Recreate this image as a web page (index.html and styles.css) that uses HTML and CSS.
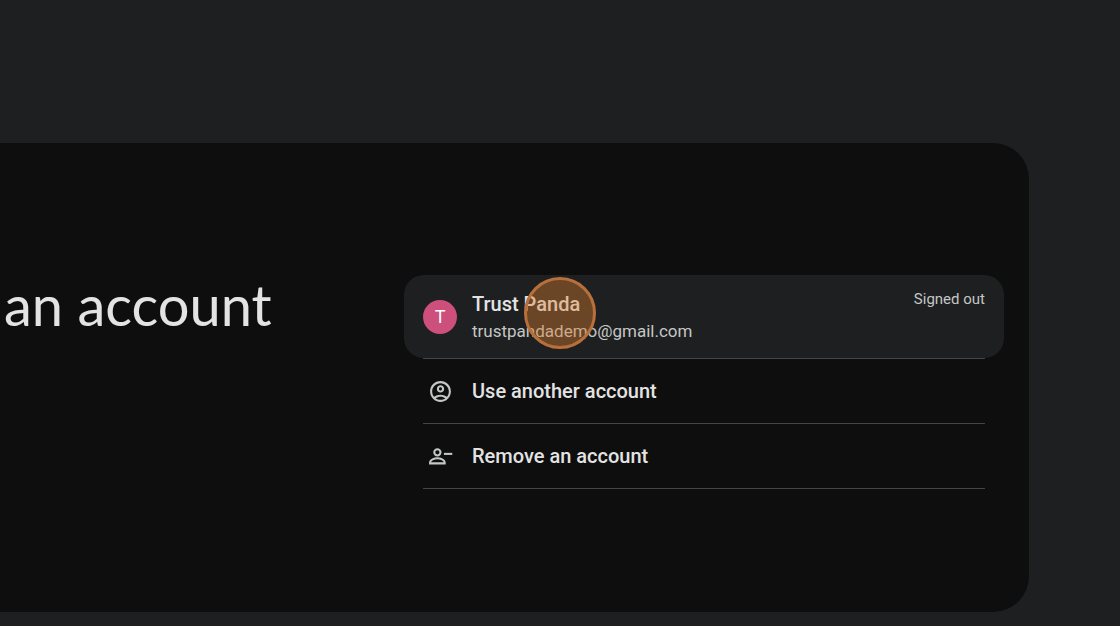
FILE: index.html
```
<!DOCTYPE html>
<html lang="en">
<head>
<meta charset="utf-8">
<meta name="viewport" content="width=device-width, initial-scale=1">
<title>Choose an account</title>
<link rel="stylesheet" href="styles.css">
</head>
<body>
<main class="card">
  <h1 class="title">an account</h1>
  <ul class="accounts">
    <li class="item">
      <button class="account" type="button">
        <span class="avatar">T</span>
        <span class="identity">
          <span class="name">Trust Panda</span>
          <span class="email">trustpandademo@gmail.com</span>
        </span>
        <span class="status">Signed out</span>
        <span class="click-marker" aria-hidden="true"></span>
      </button>
    </li>
    <li class="item">
      <button class="action" type="button">
        <span class="icon-slot"><svg class="icon" viewBox="0 0 24 24" aria-hidden="true"><path d="M12 2C6.48 2 2 6.48 2 12s4.480 10 10 10 10-4.480 10-10S17.520 2 12 2zM7.350 18.500C8.660 17.560 10.260 17 12 17s3.340.56 4.650 1.500C15.340 19.440 13.740 20 12 20s-3.340-.56-4.650-1.500zm10.790-1.380C16.450 15.800 14.320 15 12 15s-4.450.8-6.140 2.120C4.700 15.730 4 13.950 4 12c0-4.420 3.580-8 8-8s8 3.580 8 8c0 1.950-.7 3.730-1.860 5.120z"/><path d="M12 6c-1.930 0-3.500 1.570-3.500 3.500S10.070 13 12 13s3.500-1.570 3.500-3.500S13.930 6 12 6zm0 5c-.83 0-1.500-.67-1.500-1.500S11.170 8 12 8s1.500.67 1.500 1.500S12.830 11 12 11z"/></svg></span>
        <span>Use another account</span>
      </button>
    </li>
    <li class="item">
      <button class="action" type="button">
        <span class="icon-slot"><svg class="icon" viewBox="0 0 24 24" aria-hidden="true"><circle class="outline" cx="9" cy="8" r="3"/><path class="outline" d="M2 18.600v-1.200C2 15.200 6 13.700 9 13.700s7 1.500 7 3.700v1.200z"/><path d="M15.300 8.500h8v2h-8z"/></svg></span>
        <span>Remove an account</span>
      </button>
    </li>
  </ul>
</main>
</body>
</html>
```
FILE: styles.css
```
* { box-sizing: border-box; }

body {
  margin: 0;
  min-height: 100vh;
  padding: 143px 91px 14px 0;
  display: flex;
  background: #1e1f20;
  color: #e3e3e3;
  font-family: Roboto, "Noto Sans", sans-serif;
}

.card {
  flex: 1;
  display: grid;
  grid-template-columns: 404px 1fr;
  align-items: start;
  padding: 132px 25px 122px 0;
  background: #0e0e0e;
  border-radius: 0 36px 36px 0;
}

.title {
  margin: 0;
  padding-left: 4px;
  font-family: Lato, sans-serif;
  font-size: 56px;
  line-height: 60px;
  font-weight: 400;
}

.accounts { margin: 0; padding: 0; list-style: none; }

.item::after {
  content: "";
  display: block;
  height: 1px;
  margin: 0 19px;
  background: #444746;
}

.account, .action {
  width: 100%;
  display: flex;
  align-items: center;
  gap: 15px;
  padding: 0 19px;
  border: 0;
  color: inherit;
  font-family: inherit;
  text-align: left;
  cursor: pointer;
}

.account {
  position: relative;
  height: 83px;
  border-radius: 20px;
  background: #1e1f20;
}

.action {
  height: 64px;
  background: transparent;
  font-size: 20px;
  font-weight: 500;
}

.avatar, .icon-slot {
  flex: none;
  width: 34px;
  display: grid;
  place-items: center;
}

.avatar {
  height: 34px;
  border-radius: 50%;
  background: #cd4f7b;
  color: #fff;
  font-size: 18px;
}

.icon { width: 25px; height: 25px; fill: #c4c7c5; }

.outline { fill: none; stroke: #c4c7c5; stroke-width: 2; }

.identity { flex: 1; display: flex; flex-direction: column; }

.name { font-size: 20px; line-height: 28px; font-weight: 500; }

.email { font-size: 17px; line-height: 26px; color: #c4c7c5; }

.status {
  align-self: flex-start;
  padding-top: 14px;
  font-size: 15px;
  line-height: 20px;
  color: #c4c7c5;
}

.click-marker {
  position: absolute;
  left: 120px;
  top: 2px;
  width: 72px;
  height: 72px;
  border: 3px solid #b8703a;
  border-radius: 50%;
  background: rgba(220, 128, 48, 0.4);
}
```
